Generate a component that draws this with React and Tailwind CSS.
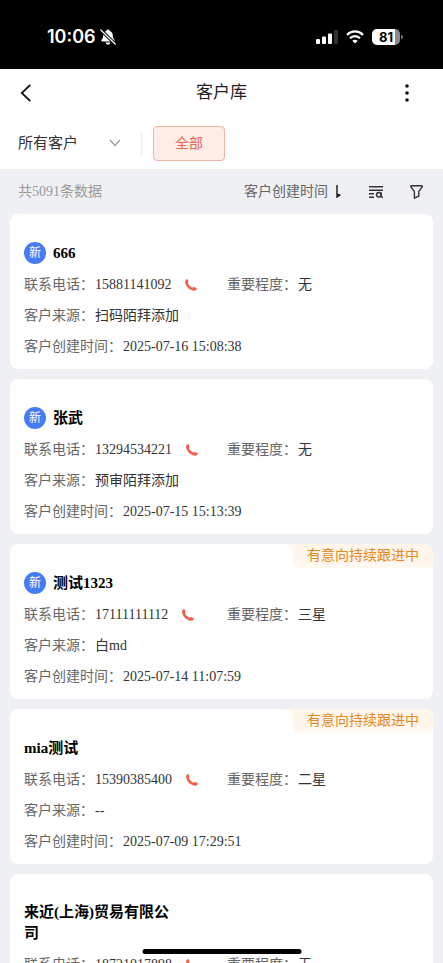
import React, { useState } from "react";

const customers = [
  {
    name: "666",
    isNew: true,
    phone: "15881141092",
    level: "无",
    source: "扫码陌拜添加",
    created: "2025-07-16 15:08:38",
  },
  {
    name: "张武",
    isNew: true,
    phone: "13294534221",
    level: "无",
    source: "预审陌拜添加",
    created: "2025-07-15 15:13:39",
  },
  {
    name: "测试1323",
    isNew: true,
    phone: "17111111112",
    level: "三星",
    source: "白md",
    created: "2025-07-14 11:07:59",
    status: "有意向持续跟进中",
  },
  {
    name: "mia测试",
    phone: "15390385400",
    level: "二星",
    source: "--",
    created: "2025-07-09 17:29:51",
    status: "有意向持续跟进中",
  },
  {
    name: "来近(上海)贸易有限公司",
    phone: "18721017898",
    level: "无",
  },
];

const PhoneIcon = () => (
  <svg width="12" height="12" viewBox="0 0 12 12" fill="#f0604a">
    <path d="M0.4 1.3C0.8 0.5 1.6 0.1 2.3 0.3C2.7 0.4 2.9 0.7 3 1.1L3.4 3C3.5 3.5 3.3 3.8 2.9 4C3.6 5.9 5.3 7.7 7.4 8.7C7.7 8.2 8.1 8 8.6 8.1L11 8.7C11.5 8.8 11.8 9.1 11.8 9.6C11.8 10.9 10.8 11.8 9.3 11.7C4.6 11.3 0.5 7.3 0.1 2.9C0.1 2.3 0.1 1.8 0.4 1.3Z" />
  </svg>
);

const StatusBar = () => (
  <div className="h-[69px] shrink-0 bg-black text-white flex items-center justify-between pt-1 pl-[47px] pr-10">
    <div className="flex items-center gap-1 font-['Inter',sans-serif]">
      <span className="text-[18px] leading-6 font-semibold">10:06</span>
      <svg width="16" height="16" viewBox="0 0 16 16">
        <path
          d="M8 0.4C8.9 0.4 9.4 1 9.5 1.7C11.6 2.3 12.7 4 12.8 6.3C12.9 8.9 13.5 9.8 14.4 10.8C15 11.6 14.7 12.5 13.7 12.5H2.3C1.3 12.5 1 11.6 1.6 10.8C2.5 9.8 3.1 8.9 3.2 6.3C3.3 4 4.4 2.3 6.5 1.7C6.6 1 7.1 0.4 8 0.4ZM5.6 13.5H10.4C10.2 14.8 9.3 15.6 8 15.6C6.7 15.6 5.8 14.8 5.6 13.5Z"
          fill="#fff"
        />
        <path d="M1 1.2L15.2 15" stroke="#000" strokeWidth="3.2" />
        <path d="M0.8 1L15.2 15" stroke="#fff" strokeWidth="1.2" strokeLinecap="round" />
      </svg>
    </div>
    <div className="flex items-center">
      <svg width="22" height="16" viewBox="0 0 22 16" fill="#fff">
        <rect x="0" y="10" width="4" height="5" rx="1" />
        <rect x="6" y="7.5" width="4" height="7.5" rx="1" />
        <rect x="12" y="4.5" width="4" height="10.5" rx="1" />
        <rect x="18" y="1" width="4" height="14" rx="1" fill="#333" />
      </svg>
      <svg className="ml-2" width="18" height="14" viewBox="0 0 18 14" fill="none" stroke="#fff" strokeWidth="2.2">
        <path d="M1 4.9C5.6 0.3 12.4 0.3 17 4.9" />
        <path d="M4 8.2C6.9 5.3 11.1 5.3 14 8.2" />
        <path d="M9 13.5L6.3 10.7C7.8 9.3 10.2 9.3 11.7 10.7Z" fill="#fff" stroke="none" />
      </svg>
      <div className="ml-2 flex items-center">
        <div className="w-7 h-4 rounded-[5px] bg-[linear-gradient(90deg,#fff_81%,#8a8a8a_81%)] text-black text-[13px] leading-4 font-bold text-center font-['Inter',sans-serif]">
          81
        </div>
        <span className="ml-px w-[2px] h-1 rounded-r-full bg-[#777]" />
      </div>
    </div>
  </div>
);

const Header = () => (
  <header className="h-12 shrink-0 bg-white grid grid-cols-3 items-center px-5">
    <button aria-label="返回" className="justify-self-start">
      <svg width="12" height="18" viewBox="0 0 12 18" fill="none" stroke="#111" strokeWidth="1.8">
        <path d="M10.3 0.8L1.8 9L10.3 17.2" />
      </svg>
    </button>
    <h1 className="text-[17px] leading-6 text-center text-[#222]">客户库</h1>
    <button aria-label="更多" className="justify-self-end px-3.5">
      <svg width="4" height="18" viewBox="0 0 4 18" fill="#111">
        <circle cx="2" cy="2" r="1.8" />
        <circle cx="2" cy="9" r="1.8" />
        <circle cx="2" cy="16" r="1.8" />
      </svg>
    </button>
  </header>
);

const FilterBar = () => {
  const [scope, setScope] = useState("all");

  return (
    <div className="h-[52px] shrink-0 bg-white flex items-center pl-[18px]">
      <div className="relative w-[103px]">
        <select
          aria-label="客户范围"
          value={scope}
          onChange={(e) => setScope(e.target.value)}
          className="w-full appearance-none bg-transparent text-[15px] leading-6 text-[#333]"
        >
          <option value="all">所有客户</option>
        </select>
        <svg
          className="absolute right-0 top-2 pointer-events-none"
          width="12"
          height="8"
          viewBox="0 0 12 8"
          fill="none"
          stroke="#999"
          strokeWidth="1.2"
        >
          <path d="M1 1L6 6.5L11 1" />
        </svg>
      </div>
      <span className="ml-5 w-px h-6 bg-[#eeeeee]" />
      <button className="ml-[11px] w-[72px] h-[35px] rounded border border-[#f3b3a5] bg-[#fdece7] text-[14px] text-[#ea6a4c]">
        全部
      </button>
    </div>
  );
};

const SummaryBar = () => (
  <div className="h-[45px] shrink-0 flex items-center justify-between pl-[18px] pr-5 text-[14px] leading-5">
    <span className="text-[#999]">共5091条数据</span>
    <div className="flex items-center">
      <button className="flex items-center gap-2 text-[#666]">
        客户创建时间
        <svg width="5" height="13" viewBox="0 0 5 13" fill="none" stroke="#222" strokeWidth="1.5">
          <path d="M1 0V12L4.4 9.6" />
          <path d="M1 8.6L4.6 9.4L1 12.6Z" fill="#222" stroke="none" />
        </svg>
      </button>
      <button aria-label="搜索" className="ml-7">
        <svg width="14" height="14" viewBox="0 0 14 14" fill="none" stroke="#333" strokeWidth="1.5">
          <path d="M0 1.7H14M0 5.2H14M0 8.7H5M0 12.3H5" />
          <circle cx="9.8" cy="9.7" r="2.3" />
          <path d="M12.2 7.4V11.2L13.8 13" />
        </svg>
      </button>
      <button aria-label="筛选" className="ml-[27px]">
        <svg width="13" height="14" viewBox="0 0 13 14" fill="none" stroke="#333" strokeWidth="1.4" strokeLinejoin="round">
          <path d="M1.3 0.8H11.7C12.3 0.8 12.5 1.4 12.1 1.9L8.8 6.6V11.2L4.4 13.2V6.6L0.9 1.9C0.5 1.4 0.7 0.8 1.3 0.8Z" />
        </svg>
      </button>
    </div>
  </div>
);

const Field = ({ label, children }) => (
  <div className="flex items-center">
    <span className="text-[#666]">{label}：</span>
    <span className="pl-px text-[#333]">{children}</span>
  </div>
);

const StatusTag = ({ text }) => (
  <div className="absolute top-0 right-0 h-6 flex">
    <svg width="14" height="24" viewBox="0 0 14 24" fill="#fff5ea">
      <path d="M0 0H14V24C10 24 8.5 21.5 8 18L7 9C6.5 4.5 4.5 1 0 0Z" />
    </svg>
    <span className="h-6 pl-[7px] pr-3.5 bg-[linear-gradient(180deg,#fff5ea_60%,#fff9f2)] text-[14px] leading-6 text-[#e28a20]">
      {text}
    </span>
  </div>
);

const CustomerCard = ({ customer }) => (
  <li className="relative overflow-hidden shrink-0 rounded-lg bg-white px-3.5 pt-7 pb-3 flex flex-col gap-2.5 text-[14px] leading-[21px]">
    {customer.status && <StatusTag text={customer.status} />}
    <div className="min-h-[22px] flex items-center gap-[7px]">
      {customer.isNew && (
        <span className="size-[22px] rounded-full bg-[#467cf3] text-white text-[12px] leading-[22px] text-center">
          新
        </span>
      )}
      <h2 className="max-w-[152px] text-[15px] font-bold text-black">{customer.name}</h2>
    </div>
    <div className="grid grid-cols-[203px_1fr]">
      <div className="flex items-center">
        <Field label="联系电话">{customer.phone}</Field>
        <a href={`tel:${customer.phone}`} aria-label="拨打电话" className="ml-3.5">
          <PhoneIcon />
        </a>
      </div>
      <Field label="重要程度">{customer.level}</Field>
    </div>
    {customer.source && <Field label="客户来源">{customer.source}</Field>}
    {customer.created && <Field label="客户创建时间">{customer.created}</Field>}
  </li>
);

const App = () => {
  return (
    <div className="h-screen overflow-hidden flex flex-col bg-[#eff0f4] font-['Liberation_Serif','Noto_Sans_CJK_SC',serif]">
      <StatusBar />
      <Header />
      <FilterBar />
      <SummaryBar />
      <ul className="flex-1 min-h-0 overflow-y-auto [scrollbar-width:none] flex flex-col gap-2.5 px-2.5">
        {customers.map((customer, i) => (
          <CustomerCard key={i} customer={customer} />
        ))}
      </ul>
      {/* Home indicator */}
      <div className="fixed bottom-[9px] left-1/2 -translate-x-1/2 w-[159px] h-[5px] rounded-full bg-black" />
    </div>
  );
};

export default App;
